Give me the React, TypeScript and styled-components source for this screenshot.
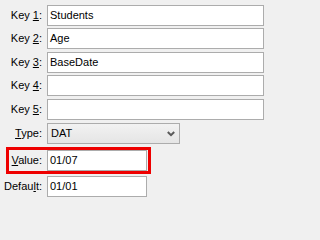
import React from 'react'
import styled, { createGlobalStyle } from 'styled-components'

const GlobalStyle = createGlobalStyle`
  html, body {
    margin: 0;
    padding: 0;
    background: #f0f0f0;
    font-family: 'Liberation Sans', Arial, sans-serif;
    font-size: 11px;
    color: #000;
  }
`

const Form = styled.div`
  display: flex;
  flex-direction: column;
  padding-top: 5px;
  width: 268px;
`

const Row = styled.div<{ $top?: number; $label?: number }>`
  display: grid;
  grid-template-columns: ${(p) => p.$label ?? 42}px auto;
  column-gap: 5px;
  align-items: center;
  margin-top: ${(p) => p.$top ?? 0}px;
  height: 21px;
`

const Label = styled.label`
  text-align: right;
  white-space: nowrap;
  line-height: 13px;

  u {
    text-decoration: underline;
    text-underline-offset: 1px;
  }
`

const Field = styled.div<{ $width: number }>`
  box-sizing: border-box;
  width: ${(p) => p.$width}px;
  height: 21px;
  border: 1px solid #acacac;
  background: #fff;
  padding: 0 2px;
  display: flex;
  align-items: center;
  line-height: 13px;
`

const Select = styled.div`
  box-sizing: border-box;
  width: 133px;
  height: 21px;
  border: 1px solid #acacac;
  background: linear-gradient(#f2f2f2, #e5e5e5);
  padding: 0 4px 0 3px;
  display: flex;
  align-items: center;
  justify-content: space-between;
  line-height: 13px;
`

const Highlight = styled.div`
  box-sizing: border-box;
  margin: 3px 0 0 6px;
  width: 145px;
  border: 3px solid #ee0000;
`

const Chevron = () => (
  <svg width="8" height="6" viewBox="0 0 8 6">
    <path d="M0.8 1 L4 4.2 L7.2 1" fill="none" stroke="#5a5a5a" strokeWidth="2" />
  </svg>
)

export default function App() {
  return (
    <>
      <GlobalStyle />
      <Form>
        <Row>
          <Label>Key <u>1</u>:</Label>
          <Field $width={217}>Students</Field>
        </Row>
        <Row $top={2}>
          <Label>Key <u>2</u>:</Label>
          <Field $width={217}>Age</Field>
        </Row>
        <Row $top={3}>
          <Label>Key <u>3</u>:</Label>
          <Field $width={217}>BaseDate</Field>
        </Row>
        <Row $top={2}>
          <Label>Key <u>4</u>:</Label>
          <Field $width={217} />
        </Row>
        <Row $top={3}>
          <Label>Key <u>5</u>:</Label>
          <Field $width={217} />
        </Row>
        <Row $top={3}>
          <Label><u>T</u>ype:</Label>
          <Select>
            <span>DAT</span>
            <Chevron />
          </Select>
        </Row>
        <Highlight>
          <Row $label={33}>
            <Label><u>V</u>alue:</Label>
            <Field $width={100}>01/07</Field>
          </Row>
        </Highlight>
        <Row $top={2}>
          <Label>Defau<u>l</u>t:</Label>
          <Field $width={100}>01/01</Field>
        </Row>
      </Form>
    </>
  )
}
